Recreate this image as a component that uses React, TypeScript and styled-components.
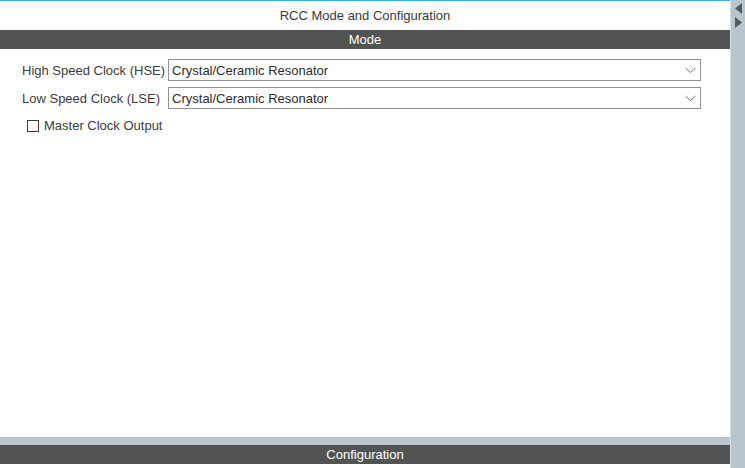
import React, { useState } from 'react';
import styled, { createGlobalStyle } from 'styled-components';

const GlobalStyle = createGlobalStyle`
  html, body {
    margin: 0;
    padding: 0;
    background: #ffffff;
  }
  body {
    font-family: 'Liberation Sans', Arial, sans-serif;
  }
  * {
    box-sizing: border-box;
  }
`;

const Page = styled.div`
  width: 745px;
  height: 468px;
  display: flex;
  overflow: hidden;
  background: #ffffff;
`;

const MainPanel = styled.div`
  flex: 1;
  display: flex;
  flex-direction: column;
  border-top: 1px solid #3aa8dc;
  min-width: 0;
`;

const PanelTitle = styled.div`
  height: 29px;
  display: flex;
  align-items: center;
  justify-content: center;
  font-size: 13px;
  color: #3a3a3a;
  padding-bottom: 1px;
  flex-shrink: 0;
`;

const SectionBar = styled.div`
  height: 19px;
  background: #525453;
  color: #ffffff;
  font-size: 13px;
  display: flex;
  align-items: center;
  justify-content: center;
  flex-shrink: 0;
`;

const ModeContent = styled.div`
  flex: 1;
  padding: 10px 29px 0 22px;
`;

const FormGrid = styled.div`
  display: grid;
  grid-template-columns: max-content 1fr;
  column-gap: 3px;
  row-gap: 6px;
  align-items: center;
`;

const FieldLabel = styled.label`
  font-size: 13px;
  line-height: 15px;
  color: #3c3c3c;
`;

const SelectBox = styled.div`
  height: 22px;
  border: 1px solid #8c9296;
  display: flex;
  align-items: center;
  justify-content: space-between;
  padding: 0 4px 0 3px;
  font-size: 13px;
  color: #2c2c2c;
  cursor: pointer;
`;

const CheckRow = styled.label`
  display: flex;
  align-items: center;
  gap: 5px;
  margin: 9px 0 0 5px;
  font-size: 13px;
  color: #3c3c3c;
  cursor: pointer;
`;

const CheckBox = styled.span<{ $checked: boolean }>`
  width: 12px;
  height: 12px;
  border: 1px solid #3c3c3c;
  background: ${p => (p.$checked ? '#3c3c3c' : '#ffffff')};
`;

const Splitter = styled.div`
  height: 8px;
  background: #b9c4cb;
  flex-shrink: 0;
`;

const BottomGap = styled.div`
  height: 4px;
  flex-shrink: 0;
`;

const SideBar = styled.div`
  width: 15px;
  flex-shrink: 0;
  background: #b9c5cc;
  border-left: 1px solid #d7dde1;
  display: flex;
  flex-direction: column;
  align-items: center;
  padding-top: 3px;
  gap: 3px;
`;

const Chevron = () => (
  <svg width="11" height="7" viewBox="0 0 11 7">
    <path d="M0.5 1 L5.5 5.5 L10.5 1" fill="none" stroke="#6d7478" strokeWidth="1" />
  </svg>
);

const ArrowLeft = () => (
  <svg width="7" height="11" viewBox="0 0 7 11">
    <path d="M7 0 L0 5.5 L7 11 Z" fill="#55595b" />
  </svg>
);

const ArrowRight = () => (
  <svg width="7" height="11" viewBox="0 0 7 11">
    <path d="M0 0 L7 5.5 L0 11 Z" fill="#55595b" />
  </svg>
);

const App: React.FC = () => {
  const [mco, setMco] = useState(false);

  return (
    <Page>
      <GlobalStyle />
      <MainPanel>
        <PanelTitle>RCC Mode and Configuration</PanelTitle>
        <SectionBar>Mode</SectionBar>
        <ModeContent>
          <FormGrid>
            <FieldLabel>High Speed Clock (HSE)</FieldLabel>
            <SelectBox>
              <span>Crystal/Ceramic Resonator</span>
              <Chevron />
            </SelectBox>
            <FieldLabel>Low Speed Clock (LSE)</FieldLabel>
            <SelectBox>
              <span>Crystal/Ceramic Resonator</span>
              <Chevron />
            </SelectBox>
          </FormGrid>
          <CheckRow onClick={() => setMco(v => !v)}>
            <CheckBox $checked={mco} />
            Master Clock Output
          </CheckRow>
        </ModeContent>
        <Splitter />
        <SectionBar>Configuration</SectionBar>
        <BottomGap />
      </MainPanel>
      <SideBar>
        <ArrowLeft />
        <ArrowRight />
      </SideBar>
    </Page>
  );
};

export default App;
